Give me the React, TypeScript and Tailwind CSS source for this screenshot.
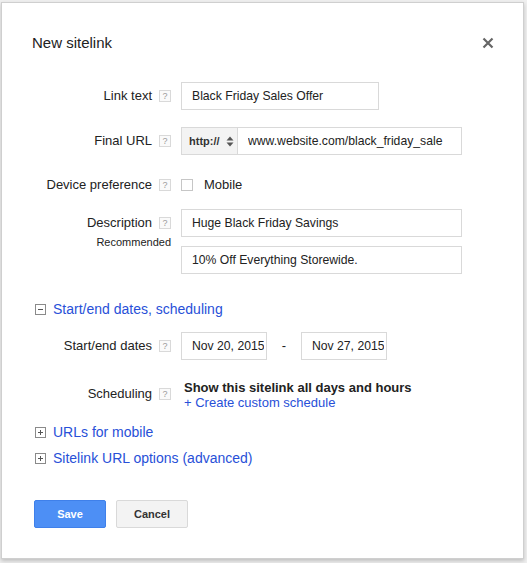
import React, { useState } from "react";

const Help = () => (
  <span className="inline-flex items-center justify-center w-[12px] h-[12px] border border-[#d9d9d9] bg-[#fafafa] text-[9px] leading-none text-[#9a9a9a] ml-[7px]">
    ?
  </span>
);

const Toggle = ({ open }: { open: boolean }) => (
  <span className="relative inline-block w-[11px] h-[11px] border border-[#8a8a8a] bg-white mr-[7px]">
    <span className="absolute left-[2px] right-[2px] top-[4px] h-px bg-[#555]" />
    {!open && <span className="absolute top-[2px] bottom-[2px] left-[4px] w-px bg-[#555]" />}
  </span>
);

const Row = ({
  label,
  sub,
  help = true,
  className = "",
  children,
}: {
  label: string;
  sub?: string;
  help?: boolean;
  className?: string;
  children: React.ReactNode;
}) => (
  <div className={`flex ${className}`}>
    <div className="w-[139px] shrink-0 flex flex-col items-end">
      <div className="flex items-center h-[28px] text-[13px] text-[#222]">
        {label}
        {help && <Help />}
      </div>
      {sub && <div className="text-[11px] text-[#222] -mt-[3px]">{sub}</div>}
    </div>
    <div className="ml-[10px]">{children}</div>
  </div>
);

const inputCls =
  "h-[28px] border border-[#d9d9d9] pl-[10px] pr-[2px] text-[12.2px] text-[#222] outline-none bg-white";

const Expander = ({ open, label, className = "" }: { open: boolean; label: string; className?: string }) => (
  <div className={`ml-[3px] flex items-center text-[14px] text-[#2850d8] h-[16px] ${className}`}>
    <Toggle open={open} />
    {label}
  </div>
);

export default function App() {
  const [mobile, setMobile] = useState(false);

  return (
    <div
      className="w-[527px] h-[563px] bg-[#efefef] pt-[2px] pl-[1px]"
      style={{ fontFamily: '"Liberation Sans", Arial, sans-serif' }}
    >
      <div className="w-[523px] h-[557px] bg-white border border-[#cfcfcf] shadow-[0_2px_4px_rgba(0,0,0,0.2)] pl-[30px] pr-[29px] pt-[30px]">
        <div className="flex items-center justify-between">
          <h1 className="text-[15px] text-[#222] leading-[20px]">New sitelink</h1>
          <svg width="12" height="12" viewBox="0 0 12 12">
            <path d="M1.5 1.5L10.5 10.5M10.5 1.5L1.5 10.5" stroke="#666" strokeWidth="2.2" />
          </svg>
        </div>

        <Row label="Link text" className="mt-[29px]">
          <input className={`${inputCls} w-[198px]`} defaultValue="Black Friday Sales Offer" />
        </Row>

        <Row label="Final URL" className="mt-[17px]">
          <div className="flex">
            <div className="h-[28px] w-[57px] flex items-center pl-[7px] gap-[6px] bg-[#f3f3f3] border border-[#d9d9d9] text-[11px] font-bold text-[#333]">
              http://
              <svg width="8" height="11" viewBox="0 0 8 11">
                <path d="M4 0.5L7.5 4.5H0.5Z M4 10.5L7.5 6.5H0.5Z" fill="#555" />
              </svg>
            </div>
            <input
              className={`${inputCls} w-[224px] border-l-0`}
              defaultValue="www.website.com/black_friday_sale"
            />
          </div>
        </Row>

        <Row label="Device preference" className="mt-[16px]">
          <label className="flex items-center h-[28px] text-[13px] text-[#222]">
            <span
              onClick={() => setMobile(!mobile)}
              className="w-[12px] h-[12px] border border-[#c6c6c6] bg-white mr-[11px]"
            />
            Mobile
          </label>
        </Row>

        <Row label="Description" sub="Recommended" className="mt-[10px]">
          <div className="flex flex-col gap-[9px]">
            <input className={`${inputCls} w-[281px]`} defaultValue="Huge Black Friday Savings" />
            <input className={`${inputCls} w-[281px]`} defaultValue="10% Off Everything Storewide." />
          </div>
        </Row>

        <Expander open label="Start/end dates, scheduling" className="mt-[27px]" />

        <Row label="Start/end dates" className="mt-[15px]">
          <div className="flex items-center">
            <input className={`${inputCls} w-[86px]`} defaultValue="Nov 20, 2015" />
            <span className="w-[34px] text-center text-[13px] text-[#222]">-</span>
            <input
              className={`${inputCls} w-[86px] border-[#4d90fe] pl-[9px]`}
              defaultValue="Nov 27, 2015"
            />
          </div>
        </Row>

        <Row label="Scheduling" className="mt-[20px]">
          <div className="ml-[3px] text-[13px] leading-[15px]">
            <div className="font-bold text-[#222]">Show this sitelink all days and hours</div>
            <div className="text-[#2850d8]">+ Create custom schedule</div>
          </div>
        </Row>

        <Expander open={false} label="URLs for mobile" className="mt-[14px]" />
        <Expander open={false} label="Sitelink URL options (advanced)" className="mt-[10px]" />

        <div className="mt-[34px] ml-[2px] flex gap-[10px]">
          <button className="w-[72px] h-[28px] rounded-[2px] bg-[#4d8ff5] border border-[#3f80ea] text-white text-[11px] font-bold">
            Save
          </button>
          <button className="w-[72px] h-[28px] rounded-[2px] bg-[#f3f3f3] border border-[#d9d9d9] text-[#333] text-[11px] font-bold">
            Cancel
          </button>
        </div>
      </div>
    </div>
  );
}
